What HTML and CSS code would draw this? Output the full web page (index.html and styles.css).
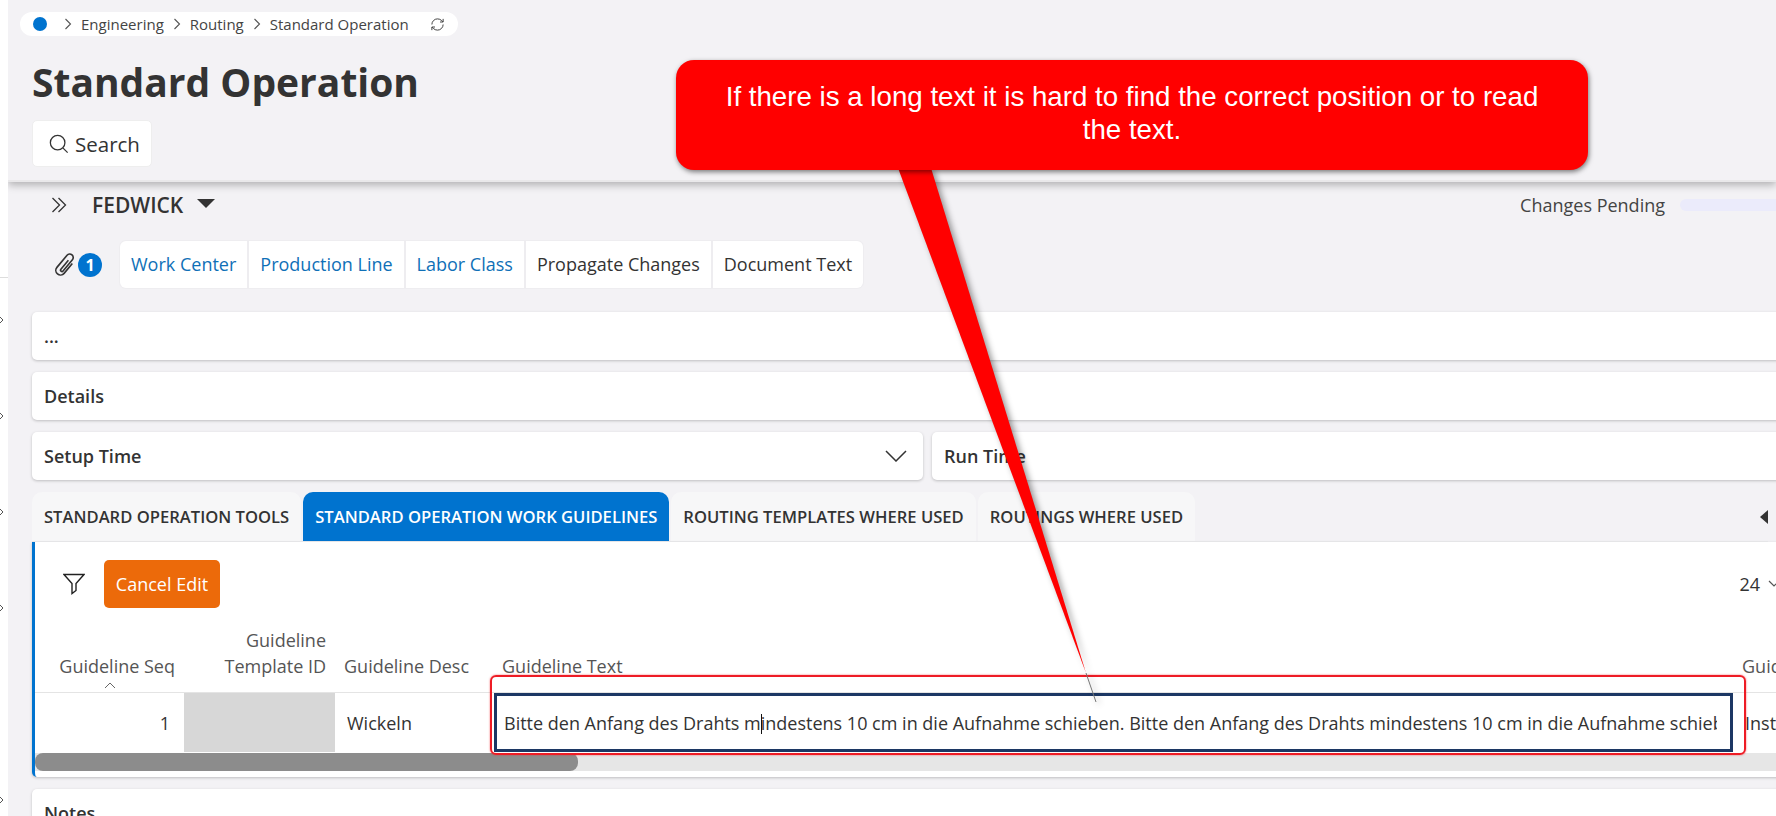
FILE: index.html
```html
<!DOCTYPE html>
<html lang="en">
<head>
<meta charset="UTF-8">
<meta name="viewport" content="width=device-width, initial-scale=1.0">
<title>Standard Operation</title>
<link rel="stylesheet" href="styles.css">
</head>
<body>
<div class="page">
    <div class="nav-strip">
        <span class="nav-line"></span>
        <svg class="nav-arrow arrow-1" viewBox="0 0 4 8"><path d="M0 1l3 3-3 3"/></svg>
        <svg class="nav-arrow arrow-2" viewBox="0 0 4 8"><path d="M0 1l3 3-3 3"/></svg>
        <svg class="nav-arrow arrow-3" viewBox="0 0 4 8"><path d="M0 1l3 3-3 3"/></svg>
        <svg class="nav-arrow arrow-4" viewBox="0 0 4 8"><path d="M0 1l3 3-3 3"/></svg>
        <svg class="nav-arrow arrow-5" viewBox="0 0 4 8"><path d="M0 1l3 3-3 3"/></svg>
    </div>

    <div class="main">
        <header class="page-header">
            <nav class="breadcrumb">
                <span class="home-dot"></span>
                <svg class="crumb-sep" viewBox="0 0 8 12"><path d="M1.5 1l5 5-5 5"/></svg>
                <span>Engineering</span>
                <svg class="crumb-sep" viewBox="0 0 8 12"><path d="M1.5 1l5 5-5 5"/></svg>
                <span>Routing</span>
                <svg class="crumb-sep" viewBox="0 0 8 12"><path d="M1.5 1l5 5-5 5"/></svg>
                <span>Standard Operation</span>
                <svg class="crumb-refresh" viewBox="0 0 24 24"><path d="M3 12a9 9 0 0 1 9-9 9.75 9.75 0 0 1 6.74 2.74L21 8"/><path d="M21 3v5h-5"/><path d="M21 12a9 9 0 0 1-9 9 9.75 9.75 0 0 1-6.74-2.74L3 16"/><path d="M8 16H3v5"/></svg>
            </nav>
            <h1 class="page-title">Standard Operation</h1>
            <button class="search-btn">
                <svg viewBox="0 0 22 22"><circle cx="9.5" cy="9.5" r="8"/><path d="M15.5 15.5l5 5"/></svg>
                Search
            </button>
        </header>

        <div class="company-row">
            <div class="company-left">
                <svg class="expand-icon" viewBox="0 0 16 16"><path d="M1.5 1l7 7-7 7"/><path d="M7.5 1l7 7-7 7"/></svg>
                <span class="company-name">FEDWICK</span>
                <span class="company-caret"></span>
            </div>
            <div class="pending">
                <span>Changes Pending</span>
                <span class="pending-bar"></span>
            </div>
        </div>

        <div class="action-row">
            <svg class="clip-icon" viewBox="0 0 24 24"><path transform="rotate(40 12 12)" d="M16 7v11a4 4 0 0 1-8 0V4.5a3 3 0 0 1 6 0V17a1.2 1.2 0 0 1-2.4 0V7"/></svg>
            <span class="clip-badge">1</span>
            <div class="chips">
                <a class="chip chip-link">Work Center</a>
                <a class="chip chip-link">Production Line</a>
                <a class="chip chip-link">Labor Class</a>
                <a class="chip">Propagate Changes</a>
                <a class="chip">Document Text</a>
            </div>
        </div>

        <div class="content">
            <div class="card">...</div>
            <div class="card">Details</div>
            <div class="card-pair">
                <div class="card card-setup">
                    Setup Time
                    <svg viewBox="0 0 22 12"><path d="M1 1l10 10L21 1"/></svg>
                </div>
                <div class="card card-run">Run Time</div>
            </div>

            <div class="tabs">
                <div class="tab">STANDARD OPERATION TOOLS</div>
                <div class="tab tab-active">STANDARD OPERATION WORK GUIDELINES</div>
                <div class="tab">ROUTING TEMPLATES WHERE USED</div>
                <div class="tab">ROUTINGS WHERE USED</div>
                <span class="tabs-back"></span>
            </div>

            <section class="panel">
                <div class="toolbar">
                    <svg class="filter-icon" viewBox="0 0 22 22"><path d="M1 1.5h20l-8 9v7l-4 3v-10z"/></svg>
                    <button class="cancel-btn">Cancel Edit</button>
                    <span class="page-size">24<svg viewBox="0 0 12 8"><path d="M1 1l5 5 5-5"/></svg></span>
                </div>
                <table class="grid">
                    <colgroup>
                        <col class="col-seq">
                        <col class="col-template">
                        <col class="col-desc">
                        <col class="col-text">
                        <col class="col-next">
                    </colgroup>
                    <thead>
                        <tr>
                            <th class="num">Guideline Seq<svg class="sort-icon" viewBox="0 0 12 7"><path d="M1 6l5-5 5 5"/></svg></th>
                            <th class="num">Guideline<br>Template ID</th>
                            <th>Guideline Desc</th>
                            <th class="th-text">Guideline Text</th>
                            <th>Guideline Type</th>
                        </tr>
                    </thead>
                    <tbody>
                        <tr>
                            <td class="num">1</td>
                            <td class="cell-empty"></td>
                            <td>Wickeln</td>
                            <td class="cell-edit"><div class="edit-box"><span class="edit-text">Bitte den Anfang des Drahts m<i class="caret"></i>indestens 10 cm in die Aufnahme schieben. Bitte den Anfang des Drahts mindestens 10 cm in die Aufnahme schieben.</span></div></td>
                            <td class="cell-next">Instruction</td>
                        </tr>
                    </tbody>
                </table>
                <div class="scroll-track"><div class="scroll-thumb"></div></div>
            </section>

            <div class="card card-notes">Notes</div>
        </div>
    </div>
</div>

<div class="mark-box"></div>
<svg class="callout-tail" viewBox="0 0 1776 816" width="1776" height="816">
    <polygon points="898,168 931,168 1086,673"/>
    <line x1="1086" y1="673" x2="1096" y2="702"/>
</svg>
<div class="callout">If there is a long text it is hard to find the correct position or to read the text.</div>
</body>
</html>
```

FILE: styles.css
```css
* {
    box-sizing: border-box;
}
html, body {
    margin: 0;
    height: 100%;
    overflow: hidden;
}
body {
    font-family: "Open Sans", sans-serif;
    font-size: 18px;
    color: #333;
    background: #f3f2f5;
    position: relative;
}
.page {
    display: flex;
    height: 816px;
}

/* left strip */
.nav-strip {
    width: 8px;
    flex: none;
    background: #fff;
    position: relative;
    overflow: hidden;
}
.nav-line {
    position: absolute;
    top: 277px;
    left: 0;
    width: 8px;
    height: 1px;
    background: #ddd;
}
.nav-arrow {
    position: absolute;
    left: 0;
    width: 4px;
    height: 8px;
    fill: none;
    stroke: #555;
    stroke-width: 1;
}
.arrow-1 { top: 316px; }
.arrow-2 { top: 412px; }
.arrow-3 { top: 508px; }
.arrow-4 { top: 604px; }
.arrow-5 { top: 796px; }

.main {
    flex: 1;
    min-width: 0;
    overflow: hidden;
}

/* header */
.page-header {
    height: 182px;
    padding: 12px 24px 0 24px;
    background: #f3f2f5;
    border-bottom: 2px solid #e9e8ea;
    box-shadow: 0 3px 8px rgba(0, 0, 0, 0.28);
    position: relative;
}
.breadcrumb {
    display: inline-flex;
    align-items: center;
    height: 24px;
    margin-left: -12px;
    padding: 0 13px;
    width: 438px;
    background: #fff;
    border-radius: 12px;
    font-size: 15px;
    color: #444;
    white-space: nowrap;
}
.home-dot {
    flex: none;
    width: 14px;
    height: 14px;
    border-radius: 50%;
    background: #0073cf;
    margin-right: 8px;
}
.crumb-sep {
    flex: none;
    width: 8px;
    height: 12px;
    margin-right: 9px;
    fill: none;
    stroke: #555;
    stroke-width: 1.1;
}
.breadcrumb span + .crumb-sep {
    margin-left: 9px;
}
.crumb-refresh {
    flex: none;
    width: 15px;
    height: 15px;
    margin-left: 21px;
    fill: none;
    stroke: #444;
    stroke-width: 1.6;
}
.page-title {
    margin: 20px 0 0 0;
    font-size: 39px;
    line-height: 52px;
    font-weight: 700;
    color: #333;
}
.search-btn {
    display: flex;
    align-items: center;
    gap: 6px;
    width: 120px;
    height: 47px;
    margin-top: 12px;
    padding: 0 0 0 16px;
    background: #fff;
    border: 1px solid #eee;
    border-radius: 5px;
    font-family: inherit;
    font-size: 20.5px;
    color: #333;
}
.search-btn svg {
    width: 20px;
    height: 20px;
    fill: none;
    stroke: #333;
    stroke-width: 1.4;
}

/* company row */
.company-row {
    display: flex;
    justify-content: space-between;
    align-items: center;
    height: 46px;
}
.company-left {
    display: flex;
    align-items: center;
    padding-left: 43px;
}
.expand-icon {
    width: 16px;
    height: 16px;
    fill: none;
    stroke: #333;
    stroke-width: 1.3;
}
.company-name {
    margin-left: 25px;
    font-size: 21px;
    font-weight: 600;
    color: #333;
}
.company-caret {
    width: 0;
    height: 0;
    margin-left: 14px;
    margin-bottom: 4px;
    border-left: 9px solid transparent;
    border-right: 9px solid transparent;
    border-top: 9px solid #333;
}
.pending {
    display: flex;
    align-items: center;
    font-size: 18px;
    color: #444;
}
.pending-bar {
    width: 110px;
    height: 12px;
    margin-left: 15px;
    margin-right: -14px;
    background: #ebebfb;
    border-radius: 6px;
}

/* attachment and links */
.action-row {
    display: flex;
    align-items: center;
    height: 47px;
    margin-top: 13px;
    padding-left: 43px;
}
.clip-icon {
    width: 28px;
    height: 28px;
    fill: none;
    stroke: #333;
    stroke-width: 1.4;
}
.clip-badge {
    width: 24px;
    height: 24px;
    margin-left: -1px;
    border-radius: 50%;
    background: #0073cf;
    color: #fff;
    font-size: 16px;
    font-weight: 700;
    line-height: 24px;
    text-align: center;
}
.chips {
    display: flex;
    gap: 2px;
    margin-left: 18px;
}
.chip {
    display: block;
    height: 47px;
    padding: 0 11px;
    background: #fff;
    box-shadow: 0 0 0 1px #eeedf0;
    font-size: 18px;
    line-height: 47px;
    color: #333;
}
.chip:first-child {
    border-radius: 6px 0 0 6px;
}
.chip:last-child {
    border-radius: 0 6px 6px 0;
}
.chip-link {
    color: #0f70b7;
}

/* cards */
.content {
    width: 1850px;
    padding: 24px 0 0 24px;
}
.card {
    height: 48px;
    margin-bottom: 12px;
    padding: 0 12px;
    background: #fff;
    border-radius: 5px;
    box-shadow: 0 1px 3px rgba(0, 0, 0, 0.22);
    font-size: 18px;
    font-weight: 600;
    line-height: 48px;
    color: #333;
}
.card-pair {
    display: flex;
    gap: 9px;
}
.card-setup {
    display: flex;
    justify-content: space-between;
    align-items: center;
    width: 891px;
    padding-right: 16px;
    line-height: 1;
}
.card-setup svg {
    width: 22px;
    height: 12px;
    fill: none;
    stroke: #333;
    stroke-width: 1.5;
}
.card-run {
    flex: 1;
    line-height: 48px;
}

/* tabs */
.tabs {
    display: flex;
    gap: 2px;
    height: 50px;
    border-bottom: 1px solid #ececee;
    position: relative;
    width: 1736px;
}
.tab {
    padding: 0 12px;
    background: #f7f7f8;
    border-radius: 10px 10px 0 0;
    font-size: 16.6px;
    font-weight: 600;
    line-height: 49px;
    color: #333;
}
.tab-active {
    background: #0073cf;
    color: #fff;
}
.tabs-back {
    position: absolute;
    top: 18px;
    left: 1728px;
    width: 0;
    height: 0;
    border-top: 7px solid transparent;
    border-bottom: 7px solid transparent;
    border-right: 8px solid #333;
}

/* panel with grid */
.panel {
    position: relative;
    height: 235px;
    margin-bottom: 12px;
    background: #fff;
    border-left: 3px solid #0073cf;
    border-radius: 0 0 0 5px;
    box-shadow: 0 1px 3px rgba(0, 0, 0, 0.22);
}
.toolbar {
    display: flex;
    align-items: center;
    height: 48px;
    position: absolute;
    top: 18px;
    left: 0;
    width: 1741px;
    padding-left: 28px;
}
.filter-icon {
    width: 22px;
    height: 22px;
    fill: none;
    stroke: #222;
    stroke-width: 1.4;
}
.cancel-btn {
    width: 116px;
    height: 48px;
    margin-left: 19px;
    background: #ec6a0a;
    border: 0;
    border-radius: 5px;
    font-family: inherit;
    font-size: 18px;
    color: #fff;
}
.page-size {
    display: flex;
    align-items: center;
    gap: 8px;
    margin-left: auto;
    margin-right: -4px;
    font-size: 18px;
    color: #333;
}
.page-size svg {
    width: 12px;
    height: 8px;
    fill: none;
    stroke: #555;
    stroke-width: 1.2;
}
.grid {
    position: absolute;
    top: 72px;
    left: 0;
    table-layout: fixed;
    border-collapse: collapse;
    width: 1900px;
}
.col-seq { width: 149px; }
.col-template { width: 151px; }
.col-desc { width: 159px; }
.col-text { width: 1239px; }
.col-next { width: 202px; }
.grid th {
    height: 78px;
    padding: 0 9px 13px 9px;
    vertical-align: bottom;
    text-align: left;
    font-size: 18px;
    font-weight: 400;
    line-height: 26px;
    white-space: nowrap;
    color: #555;
    border-bottom: 1px solid #e4e4e4;
}
.grid th.th-text {
    padding-left: 8px;
}
.grid th.num {
    text-align: right;
}
.sort-icon {
    display: block;
    width: 12px;
    height: 7px;
    position: absolute;
    left: 69px;
    top: 68px;
    fill: none;
    stroke: #666;
    stroke-width: 1;
}
.grid td {
    height: 60px;
    padding: 2px 12px 0;
    font-size: 18px;
    color: #333;
    white-space: nowrap;
}
.grid td.num {
    text-align: right;
    padding-right: 14px;
}
.grid td.cell-empty {
    background: #d7d7d7;
}
.grid td.cell-edit {
    padding: 0;
}
.edit-box {
    width: 1239px;
    height: 59px;
    padding: 0 13px 0 7px;
    background: #fff;
    border: 3px solid #1c3764;
    font-size: 18px;
    line-height: 54px;
    overflow: hidden;
    white-space: nowrap;
}
.edit-text {
    display: block;
    overflow: hidden;
}
.caret {
    display: inline-block;
    width: 1px;
    height: 20px;
    margin-right: -1px;
    background: #111;
    vertical-align: -4px;
}
.scroll-track {
    position: absolute;
    top: 211px;
    left: 0;
    width: 1741px;
    height: 18px;
    background: #e6e6e6;
}
.scroll-thumb {
    width: 543px;
    height: 18px;
    background: #8c8c8c;
    border-radius: 8px;
}
.card-notes {
    height: 60px;
    line-height: 48px;
}

/* red annotation on top of the page */
.mark-box {
    position: absolute;
    left: 490px;
    top: 675px;
    width: 1256px;
    height: 80px;
    border: 2px solid #ee1c25;
    border-radius: 6px;
    box-shadow: 0 0 2px rgba(238, 28, 37, 0.7);
}
.callout-tail {
    position: absolute;
    left: 0;
    top: 0;
    pointer-events: none;
    filter: drop-shadow(3px 2px 3px rgba(0, 0, 0, 0.4));
}
.callout-tail polygon {
    fill: #f00;
}
.callout-tail line {
    stroke: #777;
    stroke-width: 1;
}
.callout {
    position: absolute;
    left: 676px;
    top: 60px;
    width: 912px;
    height: 110px;
    padding: 20px 38px 0;
    background: #f00;
    border-radius: 18px;
    box-shadow: 1px 2px 5px rgba(0, 0, 0, 0.5);
    font-family: "Liberation Sans", Arial, sans-serif;
    font-size: 27.7px;
    line-height: 33px;
    color: #fff;
    text-align: center;
}
```
